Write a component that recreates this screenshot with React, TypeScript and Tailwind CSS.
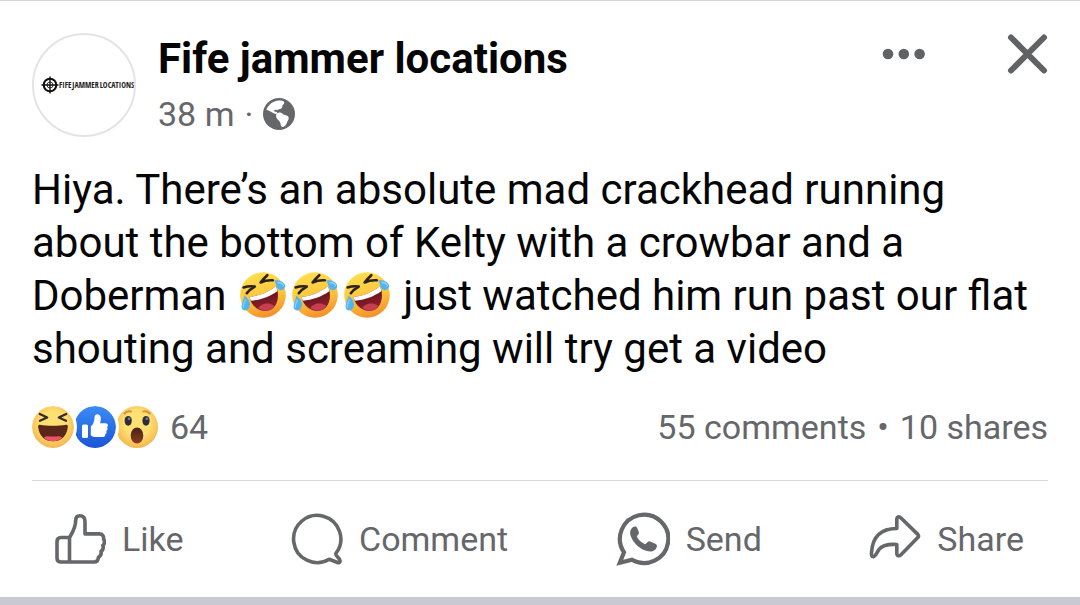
import type { ReactNode } from "react";

function PageLogo() {
  return (
    <div className="flex size-[104px] shrink-0 items-center overflow-hidden rounded-full border-2 border-[#e4e4e6] pl-[7px]">
      <svg viewBox="0 0 18 18" className="size-[18px] shrink-0" fill="none" stroke="#111" aria-hidden="true">
        <circle cx="9" cy="9" r="6.3" strokeWidth="2" />
        <circle cx="9" cy="9" r="3" strokeWidth="0.8" />
        <path d="M9 0.5v17M0.5 9h17" strokeWidth="1.4" />
      </svg>
      <span className="flex gap-px font-['Open_Sans_Condensed','Roboto_Condensed',sans-serif] text-[8px] leading-none font-bold whitespace-nowrap text-[#1c1c1c]">
        <span>FIFE</span>
        <span>JAMMER</span>
        <span>LOCATIONS</span>
      </span>
    </div>
  );
}

function Globe() {
  return (
    <svg viewBox="0 0 32 32" className="size-8" role="img" aria-label="Public">
      <circle cx="16" cy="16" r="16" fill="#65676b" />
      <path
        d="M3.400 11.700C5.300 6.500 10 3.100 15.800 2.500C18.300 2.200 21 2.800 21.300 4.400C21.500 6 19.700 6.200 19.500 7.600C19.300 9.400 19 10.800 17.200 11C15.400 11.200 14.700 11.500 14.500 12.300C13.500 11.600 11.200 11.500 11.200 12.900C11.300 13.900 13 13.300 13.900 14C14.400 14.700 14.200 16 13.200 16C10 15.700 7.800 12.900 3.400 11.700Z"
        fill="#fff"
      />
      <path
        d="M13.800 15.600C15.400 13.800 18.400 14.200 19.900 15.900C21.100 17.200 24.800 16.900 25.600 19.200C26.200 21.600 24.400 22.800 23.800 24.900C23.200 27.200 21.200 29 19.400 28.900C17.500 28.700 17.900 26.200 17.200 24.400C16.500 22.400 14 21.500 13.400 19.400C13 18 12.900 16.600 13.800 15.600Z"
        fill="#fff"
      />
    </svg>
  );
}

function RollingLaugh() {
  return (
    <svg viewBox="0 0 46 46" className="mx-[3px] inline-block size-[46px] align-[-8px]" role="img" aria-label="Rolling on the floor laughing">
      <defs>
        <linearGradient id="rofl-face" x1="0.35" y1="0" x2="0.65" y2="1">
          <stop offset="0" stopColor="#ffe04f" />
          <stop offset="0.55" stopColor="#fcc43c" />
          <stop offset="1" stopColor="#f28c2c" />
        </linearGradient>
        <linearGradient id="rofl-mouth" x1="0" y1="0" x2="0.3" y2="1">
          <stop offset="0" stopColor="#4a0d14" />
          <stop offset="1" stopColor="#8f1f2c" />
        </linearGradient>
      </defs>
      <circle cx="23" cy="23" r="22.800" fill="url(#rofl-face)" />
      <path d="M9.500 25C19 24 29 20 36 14C39.500 22 38.500 33 31.500 37.300C24 42 11.500 36.500 9.500 25Z" fill="url(#rofl-mouth)" />
      <path d="M18.500 36C20.500 31.800 28 29.500 34 33.500C33.500 35 32.500 36.600 31.500 37.300C27.500 39.600 22.500 38.900 18.500 36Z" fill="#c53f50" />
      <path d="M9.500 25C19 24 29 20 36 14C36.800 16 37.100 17.600 37.200 19.200C30 24.500 20 28 11 28.700C10.200 27.500 9.800 26.300 9.500 25Z" fill="#fff" />
      <path d="M3.600 15.400C7.500 14.200 11 13.900 14.800 14.600C11.500 16.400 8.800 18.600 6.800 21.200" fill="none" stroke="#2c2220" strokeWidth="2.600" strokeLinecap="round" strokeLinejoin="round" />
      <path d="M27.300 3.200C25 5.300 22.500 7.800 20.600 10.500C24.500 8.700 28.500 8 32.800 8.300" fill="none" stroke="#2c2220" strokeWidth="2.600" strokeLinecap="round" strokeLinejoin="round" />
      <path d="M34.200 8.600C38 7.600 43.500 9.200 45 13C46 16.500 42 19.500 38.800 17.600C36 15.800 36.500 11.500 34.200 8.600Z" fill="#54b4ee" />
      <path d="M4.500 23.500C7.500 26 10.500 29.500 10 33.500C9.500 37.500 5.500 39.800 2.800 37.500C-0.500 34.300 3.800 28.500 4.500 23.500Z" fill="#54b4ee" />
      <path d="M38 10.500Q42.500 10.700 43.500 13.700M5.500 28Q3 32.500 3.400 35" fill="none" stroke="#8ed3fa" strokeWidth="1.300" strokeLinecap="round" />
    </svg>
  );
}

function Haha() {
  return (
    <svg viewBox="0 0 42 42" className="z-20 size-[42px] rounded-full ring-3 ring-white" role="img" aria-label="Haha">
      <defs>
        <radialGradient id="reaction-face" cx="0.5" cy="0.42" r="0.58">
          <stop offset="0.5" stopColor="#ffe173" />
          <stop offset="1" stopColor="#f3b64f" />
        </radialGradient>
      </defs>
      <circle cx="21" cy="21" r="21" fill="url(#reaction-face)" />
      <path d="M7.800 18.700C16 20.200 26 20.200 34.200 18.700C35.800 18.500 36 19.800 35.800 21.500C34.500 30.500 29 35.300 21 35.300S7.500 30.500 6.200 21.500C6 19.800 6.200 18.500 7.800 18.700Z" fill="#5a2718" />
      <path d="M11.800 31.500C15 29 18 31 21 30.400C24 31 27 29 30.200 31.500C27.800 34 24.800 35.300 21 35.300S14.200 34 11.800 31.500Z" fill="#ee5066" />
      <path d="M7.800 8L15.200 11.500L8 14.700M34.200 8L26.800 11.500L34 14.700" fill="none" stroke="#332c2a" strokeWidth="2.300" strokeLinecap="round" strokeLinejoin="round" />
    </svg>
  );
}

function LikeBadge() {
  return (
    <svg viewBox="0 0 42 42" className="z-10 size-[42px] rounded-full ring-3 ring-white" role="img" aria-label="Like">
      <defs>
        <linearGradient id="like-disc" x1="0" y1="0" x2="0" y2="1">
          <stop offset="0" stopColor="#3b8cf6" />
          <stop offset="1" stopColor="#1a55d6" />
        </linearGradient>
      </defs>
      <circle cx="21" cy="21" r="21" fill="url(#like-disc)" />
      <rect x="8" y="18.500" width="6" height="13.500" rx="1.500" fill="#fff" />
      <path d="M16.800 20.500C19.500 18.500 20.400 15 20.600 11C20.700 7.300 26.500 7.200 26.800 12C26.900 14 26.400 16 26 17.300H31.500C34.300 17.300 34.500 20.300 32.900 21.300C34 22.500 33.700 24.200 32.300 24.900C33 26.200 32.500 27.600 31.200 28.200C31.600 30 30.500 31 28.800 31H21.500C19.500 31 18.200 30.300 16.800 29.500Z" fill="#fff" />
    </svg>
  );
}

function Wow() {
  return (
    <svg viewBox="0 0 42 42" className="size-[42px]" role="img" aria-label="Wow">
      <defs>
        <linearGradient id="wow-mouth" x1="0" y1="0" x2="0" y2="1">
          <stop offset="0" stopColor="#4a1f16" />
          <stop offset="1" stopColor="#85401f" />
        </linearGradient>
      </defs>
      <circle cx="21" cy="21" r="21" fill="url(#reaction-face)" />
      <ellipse cx="21" cy="29.500" rx="6.300" ry="8" fill="url(#wow-mouth)" />
      <ellipse cx="12.200" cy="14.800" rx="3.600" ry="4.900" fill="#2b2d38" />
      <ellipse cx="30" cy="14.800" rx="3.600" ry="4.900" fill="#2b2d38" />
      <circle cx="13" cy="12.700" r="1.300" fill="#76839c" />
      <circle cx="30.800" cy="12.700" r="1.300" fill="#76839c" />
      <path d="M8.500 7.500Q11 4.500 15 5.600M27.200 5.600Q31.200 4.500 33.700 7.500" fill="none" stroke="#dc8f3a" strokeWidth="2" strokeLinecap="round" />
    </svg>
  );
}

function Outline({ children }: { children: ReactNode }) {
  return (
    <svg viewBox="0 0 52 52" className="size-[52px]" fill="none" stroke="currentColor" strokeWidth="3.600" strokeLinejoin="round" strokeLinecap="round" aria-hidden="true">
      {children}
    </svg>
  );
}

const actions: { label: string; icon: ReactNode }[] = [
  {
    label: "Like",
    icon: (
      <Outline>
        <path d="M15.500 24.500H7Q3 24.500 3 28.500V45Q3 49 7 49H40C42.500 49 44.200 47.600 44.300 44.600C46.300 43.300 47.600 41 47 38.500C49 37 49.600 34.500 48.800 32.500C50.800 30.500 50.800 28 49.600 26.200C50 22.800 48.300 20.900 45.500 20.900H31V8.500C31 4.300 28.800 2.700 25.800 2.700C22.800 2.700 21.700 4.300 21.700 7C21.700 15 18.500 19.500 15.500 24.500V49" />
      </Outline>
    ),
  },
  {
    label: "Comment",
    icon: (
      <Outline>
        <path d="M44.800 40.500A23.600 23.600 0 1 0 38.200 46.300L46.500 49.500C48.400 50.200 49.500 49 48.900 47.200C48 44.600 44.200 42.500 44.800 40.500Z" />
      </Outline>
    ),
  },
  {
    label: "Send",
    icon: (
      <svg viewBox="1 0 54 56" className="h-14 w-[54px]" aria-hidden="true">
        <path d="M9 41.300A24.200 24.200 0 1 1 17 48.800L4.800 51.800Z" fill="none" stroke="currentColor" strokeWidth="4.200" strokeLinejoin="miter" />
        <path d="M17.800 16.200C19.200 15.200 21.300 15.200 22.100 16.800L23.900 21.300C24.400 23 22.400 24.300 21.800 25.500C23.400 29 26.300 31.700 30.100 33.200C31.600 32.800 32.700 30 34.400 30.300L40.900 33C42.600 34 41.900 36.500 40.800 37.900C37.700 41.200 33.500 40.900 29.600 39.300C23.100 36.600 18 31.300 15.700 25C14.400 21.400 15.200 18 17.800 16.200Z" fill="currentColor" />
      </svg>
    ),
  },
  {
    label: "Share",
    icon: (
      <Outline>
        <path d="M27.800 15.500V6.500C27.800 3.700 30.200 3.200 32 5L48.800 21.400Q50.200 23 48.800 24.600L32 41.700C30.200 43.500 27.800 43 27.800 40.200V31.500C19 31 13 32.500 10 36.500C7.500 40 6.600 43.500 4.500 43.700C2.400 43.800 2.400 41.500 2.500 39.500C3.500 24 12 15.500 27.800 15.500Z" />
      </Outline>
    ),
  },
];

export default function App() {
  return (
    <article className="border-t border-[#d4d4d6] bg-white font-[Roboto,sans-serif] text-[#050505]">
      <div className="px-8 pt-8">
        <header className="flex items-start gap-[22px]">
          <PageLogo />
          <div className="min-w-0 flex-1">
            <h1 className="text-[42px] leading-[52px] font-bold">Fife jammer locations</h1>
            <p className="mt-2 flex items-center gap-[10px] text-[34px] leading-[42px] text-[#65676b]">
              <span>38 m</span>
              <span>·</span>
              <Globe />
            </p>
          </div>
          <div className="flex gap-20 text-[#606266]">
            <button type="button" aria-label="More options">
              <svg viewBox="0 0 44 42" className="h-[42px] w-11" fill="currentColor">
                <circle cx="6" cy="21" r="5.300" />
                <circle cx="21.800" cy="21" r="5.300" />
                <circle cx="37.600" cy="21" r="5.300" />
              </svg>
            </button>
            <button type="button" aria-label="Close">
              <svg viewBox="0 0 42 42" className="size-[42px]" stroke="currentColor" strokeWidth="6" strokeLinecap="round">
                <path d="M5 4.500L38 37.500M38 4.500L5 37.500" />
              </svg>
            </button>
          </div>
        </header>

        <p className="mt-[26px] text-[42px] leading-[53px]">
          Hiya. There’s an absolute mad crackhead running about the bottom of Kelty with a crowbar and a Doberman{" "}
          <span className="whitespace-nowrap">
            <RollingLaugh />
            <RollingLaugh />
            <RollingLaugh />
          </span>{" "}
          just watched him run past our flat shouting and screaming will try get a video
        </p>

        <div className="mt-[30px] flex items-center justify-between text-[34px] leading-[44px] text-[#65676b]">
          <div className="flex items-center gap-3">
            <div className="flex">
              <Haha />
              <LikeBadge />
              <Wow />
            </div>
            <span>64</span>
          </div>
          <div className="flex gap-[11px]">
            <span>55 comments</span>
            <span>•</span>
            <span>10 shares</span>
          </div>
        </div>

        <div className="mt-[31px] flex items-center justify-between border-t border-[#d8d8da] pt-[30px] pr-6 pb-[30px] pl-[22px] text-[34px] leading-[44px] text-[#65676b]">
          {actions.map(({ label, icon }) => (
            <button key={label} type="button" className="flex items-center gap-4">
              {icon}
              <span>{label}</span>
            </button>
          ))}
        </div>
      </div>
      <div className="h-2 bg-[#c9c9d1]" />
    </article>
  );
}
